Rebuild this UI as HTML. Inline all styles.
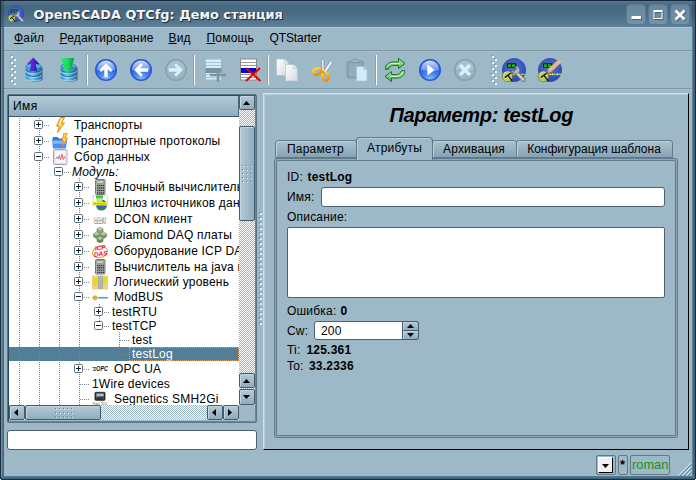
<!DOCTYPE html>
<html><head><meta charset="utf-8"><title>OpenSCADA QTCfg</title>
<style>
*{box-sizing:border-box;margin:0;padding:0}
html,body{width:696px;height:480px;overflow:hidden;background:#9db8c6}
body{position:relative;font-family:"Liberation Sans",sans-serif;font-size:12px;color:#000;line-height:14px}
.a{position:absolute}
.t{position:absolute;white-space:nowrap;line-height:14px;height:14px;letter-spacing:.2px}
b{font-weight:bold;letter-spacing:.2px}
#win{left:0;top:0;width:696px;height:480px;background:#9db8c6}
#title{left:0;top:0;width:696px;height:27px;z-index:2;border-left:1px solid #1c2c38;border-right:1px solid #1c2c38;box-shadow:inset 3px 0 0 rgba(28,44,56,.28),inset -3px 0 0 rgba(28,44,56,.28);background:linear-gradient(#16283a 0,#16283a 1px,#55778e 1px,#50728a 3px,#456780 6px,#486a83 13px,#5c7f97 26px,#5c7f97 27px)}
#title .tt{left:32.5px;top:7px;font:bold 12.9px "DejaVu Sans",sans-serif;color:#f4f4f4;text-shadow:1px 1px 1px #152838;line-height:16px;height:16px;white-space:nowrap}
#bl{left:0;top:0;width:4px;height:480px;background:linear-gradient(90deg,#1c2c38 0,#1c2c38 1px,#6a90aa 1px,#6a90aa 2px,#50748d 2px,#50748d 3px,#476982 3px)}
#br{left:692px;top:0;width:4px;height:480px;background:linear-gradient(90deg,#5a809a 0,#5a809a 1px,#44667f 1px,#44667f 2px,#3d5f78 2px,#3d5f78 3px,#1c2c38 3px)}
#bb{left:1px;top:476px;width:694px;height:4px;background:linear-gradient(#56788f 0,#56788f 1px,#4a6e88 1px,#4a6e88 2px,#3f627b 2px,#3f627b 3px,#1c2c38 3px)}
.wb{z-index:3;border:1px solid #587991;border-radius:4px;background:linear-gradient(#66879e,#7393a9)}
.menu{top:31px;letter-spacing:.2px}
u{text-decoration:underline;text-underline-offset:1px}
.hl{left:4px;width:688px;height:1px}
.ic{position:absolute;overflow:visible}
.sep{top:55px;width:2px;height:30px;background:linear-gradient(90deg,#87a1b0 0,#87a1b0 1px,#fff 1px)}
</style></head><body>
<div id="win" class="a">

<svg width="0" height="0" style="position:absolute"><defs>
<radialGradient id="gb" cx="50%" cy="100%" r="70%"><stop offset="0" stop-color="#8cc4ff"/><stop offset=".5" stop-color="#4a88f4"/><stop offset="1" stop-color="#2a5ce0"/></radialGradient>
<linearGradient id="gl" x1="0" y1="0" x2="0" y2="1"><stop offset="0" stop-color="#fff" stop-opacity=".8"/><stop offset="1" stop-color="#fff" stop-opacity=".25"/></linearGradient>
<linearGradient id="gdb" x1="0" y1="0" x2="1" y2="0"><stop offset="0" stop-color="#2a8ccc"/><stop offset=".4" stop-color="#7cccf0"/><stop offset="1" stop-color="#1c68a8"/></linearGradient>
<linearGradient id="gpu" x1="0" y1="0" x2="1" y2="0"><stop offset="0" stop-color="#6a32e8"/><stop offset=".45" stop-color="#5a24d8"/><stop offset="1" stop-color="#2c0c88"/></linearGradient>
<linearGradient id="ggr" x1="0" y1="0" x2="1" y2="0"><stop offset="0" stop-color="#28e878"/><stop offset=".5" stop-color="#20d868"/><stop offset="1" stop-color="#0c9040"/></linearGradient>
<linearGradient id="gpg" x1="0" y1="0" x2="1" y2="1"><stop offset="0" stop-color="#ffffff"/><stop offset="1" stop-color="#d4d8dc"/></linearGradient>
<linearGradient id="gor" x1="0" y1="0" x2="0" y2="1"><stop offset="0" stop-color="#ffd23a"/><stop offset="1" stop-color="#f08a00"/></linearGradient>
<linearGradient id="ggn" x1="0" y1="0" x2="0" y2="1"><stop offset="0" stop-color="#b8f0b0"/><stop offset="1" stop-color="#38b838"/></linearGradient>
<radialGradient id="gsc" cx="50%" cy="40%" r="60%"><stop offset="0" stop-color="#4a78e8"/><stop offset="1" stop-color="#2a48b8"/></radialGradient>
</defs></svg>

<div id="title" class="a"><div class="a tt">OpenSCADA QTCfg: Демо станция</div>
<svg class="ic" style="left:7px;top:6px" width="16" height="16" viewBox="0 0 24 24">
<circle cx="12" cy="12" r="11.600" fill="url(#gsc)" stroke="#2a48a8" stroke-width=".8"/>
<rect x="4.300" y="4.800" width="10.700" height="5.400" rx=".8" fill="#0c1a10" stroke="#7080a0" stroke-width=".7"/>
<path d="M6 6.200h2.800v2.800h-2.800zM10 6.200h3v2.800h-3z" fill="#18b030"/>
<circle cx="5.400" cy="18.500" r="5.200" fill="#c4cc68" stroke="#5a6428" stroke-width=".6"/>
<path d="M2.800 19.500l6-4.500M5.500 16.800l4.700 6" stroke="#101010" stroke-width="1.500"/>
<path d="M14.500 14.500l7 7.500" stroke="#707070" stroke-width="4.400" stroke-linecap="round"/><path d="M14.500 14.500l7 7.500" stroke="#c0c0c0" stroke-width="2.800" stroke-linecap="round"/>
<path d="M9.500 11.500c0 3 2.500 5 5.500 4.500l2.500-2.500c.5-3-1.500-5.500-4.500-5.500l1.500 3-2.500 2.500z" fill="#c0c0c0" stroke="#686868" stroke-width=".7"/></svg>
</div>
<div id="bl" class="a"></div><div id="br" class="a"></div><div id="bb" class="a"></div>
<div class="a" style="left:0;top:0;width:1px;height:1px;background:#fff"></div><div class="a" style="left:695px;top:0;width:1px;height:1px;background:#fff"></div><div class="a" style="left:0;top:479px;width:1px;height:1px;background:#fff"></div><div class="a" style="left:695px;top:479px;width:1px;height:1px;background:#fff"></div>


<div class="a" style="left:4px;top:27px;width:688px;height:1px;background:#b4c9d5"></div>
<div class="t menu" style="left:14px"><u>Ф</u>айл</div>
<div class="t menu" style="left:59.5px"><u>Р</u>едактирование</div>
<div class="t menu" style="left:168.5px"><u>В</u>ид</div>
<div class="t menu" style="left:206.5px"><u>П</u>омощь</div>
<div class="t menu" style="left:269.500px;letter-spacing:-.1px">QTStarter</div>
<div class="a hl" style="top:50px;background:#7d97a6"></div>
<div class="a hl" style="top:51px;background:#a6bfcd"></div>
<div class="a wb" style="left:626px;top:4px;width:20px;height:21px"><svg class="a" style="left:0;top:0" width="18" height="19"><rect x="5.5" y="12" width="9.5" height="3" fill="#2c475b" opacity=".6"/><rect x="4.5" y="11" width="9.5" height="3" fill="#fff"/></svg></div>
<div class="a wb" style="left:648px;top:4px;width:20px;height:21px"><svg class="a" style="left:0;top:0" width="18" height="19"><path d="M5.5 6h9v9h-9z M6.5 8v6h7v-6z" fill="#2c475b" opacity=".6" fill-rule="evenodd"/><path d="M4.5 5h9v9h-9z M5.500 7v6h7v-6z" fill="#fff" fill-rule="evenodd"/></svg></div>
<div class="a wb" style="left:670px;top:4px;width:20px;height:21px"><svg class="a" style="left:0;top:0" width="18" height="19"><path d="M5.5 6.500l9 9M14.500 6.500l-9 9" stroke="#2c475b" opacity=".6" stroke-width="2.600"/><path d="M4.500 5.500l9 9M13.500 5.500l-9 9" stroke="#fff" stroke-width="2.600"/></svg></div>

<div class="a hl" style="top:88px;background:#7d97a6"></div><div class="a hl" style="top:89px;background:#a6bfcd"></div>
<svg class="ic" style="left:10px;top:55px" width="7" height="32"><rect x="0" y="0" width="2" height="2" fill="#869fae"/><rect x="3" y="3" width="2" height="2" fill="#869fae"/><rect x="0" y="6" width="2" height="2" fill="#869fae"/><rect x="3" y="9" width="2" height="2" fill="#869fae"/><rect x="0" y="12" width="2" height="2" fill="#869fae"/><rect x="3" y="15" width="2" height="2" fill="#869fae"/><rect x="0" y="18" width="2" height="2" fill="#869fae"/><rect x="3" y="21" width="2" height="2" fill="#869fae"/><rect x="0" y="24" width="2" height="2" fill="#869fae"/><rect x="3" y="27" width="2" height="2" fill="#869fae"/><rect x="1" y="1" width="2" height="2" fill="#eef6fa"/><rect x="4" y="4" width="2" height="2" fill="#eef6fa"/><rect x="1" y="7" width="2" height="2" fill="#eef6fa"/><rect x="4" y="10" width="2" height="2" fill="#eef6fa"/><rect x="1" y="13" width="2" height="2" fill="#eef6fa"/><rect x="4" y="16" width="2" height="2" fill="#eef6fa"/><rect x="1" y="19" width="2" height="2" fill="#eef6fa"/><rect x="4" y="22" width="2" height="2" fill="#eef6fa"/><rect x="1" y="25" width="2" height="2" fill="#eef6fa"/><rect x="4" y="28" width="2" height="2" fill="#eef6fa"/></svg>
<svg class="ic" style="left:22px;top:56px" width="24" height="28" viewBox="0 0 24 28"><path d="M5.300 11v12c0 1.500 3.500 2.700 7.700 2.700s7.700-1.200 7.700-2.700V11z" fill="#12304a" opacity=".5"/>
<path d="M3.800 10.200v12.100c0 1.500 3.400 2.600 7.700 2.600s7.700-1.100 7.700-2.600V10.200z" fill="url(#gdb)"/>
<path d="M3.800 13.600c0 1.500 3.400 2.600 7.700 2.600s7.700-1.100 7.700-2.600M3.800 17.800c0 1.500 3.400 2.600 7.700 2.600s7.700-1.100 7.700-2.600" fill="none" stroke="#1a5a92" stroke-width="1" opacity=".85"/>
<path d="M4 14.900c0 1.500 3.400 2.600 7.500 2.600s7.500-1.100 7.500-2.600M4 19.100c0 1.500 3.400 2.600 7.500 2.600s7.500-1.100 7.500-2.600M4.300 22.800c0 1.100 3.200 2 7.200 2s7.200-.9 7.200-2" fill="none" stroke="#b4ecff" stroke-width="1.200" opacity=".55"/>
<ellipse cx="11.500" cy="10.300" rx="7.700" ry="2.500" fill="#58b4e4" stroke="#2478b4" stroke-width=".7"/><path d="M11.400 1.600L5 8c1.500 .4 3 .4 4.300 -.2L7.400 15.200h8l-1.900-7.400c1.500 .6 3 .6 4 .2z" fill="url(#gpu)"/></svg>
<svg class="ic" style="left:57px;top:56px" width="24" height="28" viewBox="0 0 24 28"><path d="M5.300 11v12c0 1.500 3.500 2.700 7.700 2.700s7.700-1.200 7.700-2.700V11z" fill="#12304a" opacity=".5"/>
<path d="M3.800 10.200v12.100c0 1.500 3.400 2.600 7.700 2.600s7.700-1.100 7.700-2.600V10.200z" fill="url(#gdb)"/>
<path d="M3.800 13.600c0 1.500 3.400 2.600 7.700 2.600s7.700-1.100 7.700-2.600M3.800 17.800c0 1.500 3.400 2.600 7.700 2.600s7.700-1.100 7.700-2.600" fill="none" stroke="#1a5a92" stroke-width="1" opacity=".85"/>
<path d="M4 14.900c0 1.500 3.400 2.600 7.500 2.600s7.500-1.100 7.500-2.600M4 19.100c0 1.500 3.400 2.600 7.500 2.600s7.500-1.100 7.500-2.600M4.300 22.800c0 1.100 3.200 2 7.200 2s7.200-.9 7.200-2" fill="none" stroke="#b4ecff" stroke-width="1.200" opacity=".55"/>
<ellipse cx="11.500" cy="10.300" rx="7.700" ry="2.500" fill="#58b4e4" stroke="#2478b4" stroke-width=".7"/><path d="M4 2h13.200l-2.400 8.500 2-.2L11.200 17.800 5 10.300l2 .2z" fill="url(#ggr)"/></svg>
<div class="a sep" style="left:86px"></div>
<svg class="ic" style="left:95px;top:58.5px" width="22" height="22" viewBox="0 0 22 22"><circle cx="11" cy="11" r="10.300" fill="url(#gb)" stroke="#2858d0" stroke-width="1.400"/><path d="M1.800 10.800a9.200 9.200 0 0 1 18.400 0q-9.200 2.500-18.400 0z" fill="url(#gl)"/><path d="M11 4.200L4.300 10.900l2 2 3-3v8.300h3.400v-8.300l3 3 2-2z" fill="#fff"/></svg>
<svg class="ic" style="left:130px;top:58.5px" width="22" height="22" viewBox="0 0 22 22"><circle cx="11" cy="11" r="10.300" fill="url(#gb)" stroke="#2858d0" stroke-width="1.400"/><path d="M1.800 10.800a9.200 9.200 0 0 1 18.400 0q-9.200 2.500-18.400 0z" fill="url(#gl)"/><path d="M4.200 11l6.700-6.700 2 2-3 3h8.300v3.400h-8.300l3 3-2 2z" fill="#fff"/></svg>
<svg class="ic" style="left:165px;top:58.5px" width="22" height="22" viewBox="0 0 22 22"><circle cx="11" cy="11" r="10.300" fill="#9db5c2" stroke="#879fae" stroke-width="1.400"/><path d="M2 10.500a9 9 0 0 1 18 0q-9 2.500-18 0z" fill="#fff" opacity=".16"/><path d="M17.800 11l-6.700-6.700-2 2 3 3h-8.300v3.400h8.300l-3 3 2 2z" fill="#d8f2fc"/></svg>
<div class="a sep" style="left:193px"></div>
<svg class="ic" style="left:205px;top:58px" width="22" height="24" viewBox="0 0 22 24">
<rect x=".5" y="1" width="16" height="21" fill="#d3edf9" stroke="#9fb8c6" stroke-width="1"/>
<path d="M1 4.500h15M1 7.500h15M1 16.500h15M1 19.500h15" stroke="#a9c4d2" stroke-width="1"/>
<rect x=".5" y="10" width="16" height="5" fill="#7b939f"/>
<path d="M5 17h16M13 10.500v13" stroke="#7b939f" stroke-width="2.600"/></svg>
<svg class="ic" style="left:240px;top:58px" width="22" height="24" viewBox="0 0 22 24">
<rect x=".5" y="1" width="16" height="21" fill="#fff" stroke="#8a8a8a" stroke-width="1"/>
<path d="M1 4.500h15M1 7.500h15M1 16.500h15M1 19.500h15" stroke="#9a9a9a" stroke-width="1"/>
<rect x="1" y="10" width="15" height="5" fill="#0000d8"/>
<path d="M6 10l14.500 13M20 10L6 23" stroke="#e80000" stroke-width="2"/></svg>
<div class="a sep" style="left:267px"></div>
<svg class="ic" style="left:275px;top:58px" width="24" height="24" viewBox="0 0 24 24">
<path d="M1.500 1h8l4 4v12.500h-12z" fill="url(#gpg)" stroke="#b8c4cc" stroke-width=".8"/><path d="M9.500 1v4h4" fill="#e8ecf0" stroke="#b8c4cc" stroke-width=".6"/>
<path d="M10.500 6.500h8l4 4V23h-12z" fill="url(#gpg)" stroke="#b8c4cc" stroke-width=".8"/><path d="M18.500 6.500v4h4" fill="#e8ecf0" stroke="#b8c4cc" stroke-width=".6"/></svg>
<svg class="ic" style="left:311px;top:58px" width="24" height="24" viewBox="0 0 24 24">
<path d="M10.200 1l2.600 0 .7 13.500-2.500 1z" fill="#e4e8ec" stroke="#8090a0" stroke-width=".7"/>
<path d="M19.800 2.500l1.700 2L13.800 16.500l-2.600-1.500z" fill="#f4f6f8" stroke="#8090a0" stroke-width=".7"/>
<ellipse cx="6" cy="13.500" rx="4" ry="3" transform="rotate(-25 6 13.500)" fill="none" stroke="url(#gor)" stroke-width="2.600"/>
<ellipse cx="14.500" cy="18.500" rx="3" ry="4" transform="rotate(-20 14.500 18.500)" fill="none" stroke="url(#gor)" stroke-width="2.600"/>
<path d="M9 12.500l3.500 2 1.500 1" stroke="#f0a000" stroke-width="2.400" fill="none"/></svg>
<svg class="ic" style="left:346px;top:58px" width="24" height="24" viewBox="0 0 24 24">
<rect x="1" y="3" width="16.500" height="17" rx="2" fill="#89a3b2" stroke="#7d97a6" stroke-width=".8"/>
<path d="M5 4.500c0-2 1.500-3.500 4.300-3.500s4.300 1.500 4.300 3.500z" fill="#9db6c4" stroke="#7d97a6" stroke-width=".8"/>
<rect x="3" y="5.500" width="12.500" height="12.500" fill="#93adbc"/>
<path d="M10.500 8.500h7l3.500 3.500V23h-10.500z" fill="#d3ebf7" stroke="#a8c2d0" stroke-width=".7"/><path d="M17.500 8.500V12H21" fill="#bcd6e4" stroke="#a8c2d0" stroke-width=".5"/></svg>
<div class="a sep" style="left:375px"></div>
<svg class="ic" style="left:383px;top:57px" width="24" height="26" viewBox="0 0 24 26">
<path d="M2.500 12.500c-.5-5 3.500-7.500 8-7.500h5V1.500l6.500 5-6.500 5V8.500h-5c-2.800 0-4.300 1.300-4.800 3.600z" fill="url(#ggn)" stroke="#1f6f24" stroke-width="1"/>
<path d="M21.500 13.500c.5 5-3.500 7.500-8 7.500h-5v3.500L2 19.500l6.500-5V17.500h5c2.800 0 4.300-1.300 4.800-3.600z" fill="url(#ggn)" stroke="#1f6f24" stroke-width="1"/>
<path d="M4 10.500c.8-3 3.300-4 6.500-4h6M20 15.500c-.8 3-3.300 4-6.500 4h-6" fill="none" stroke="#eaffea" stroke-width="1" opacity=".8"/></svg>
<svg class="ic" style="left:419px;top:58.5px" width="22" height="22" viewBox="0 0 22 22"><circle cx="11" cy="11" r="10.300" fill="url(#gb)" stroke="#2858d0" stroke-width="1.400"/><path d="M1.800 10.800a9.200 9.200 0 0 1 18.400 0q-9.200 2.500-18.400 0z" fill="url(#gl)"/><path d="M8.300 5.500v11l7.400-5.500z" fill="#fff"/></svg>
<svg class="ic" style="left:454px;top:58.5px" width="22" height="22" viewBox="0 0 22 22"><circle cx="11" cy="11" r="10.300" fill="#9db5c2" stroke="#879fae" stroke-width="1.400"/><path d="M2 10.500a9 9 0 0 1 18 0q-9 2.500-18 0z" fill="#fff" opacity=".16"/><path d="M6 6l10 10M16 6l-10 10" stroke="#d8f2fc" stroke-width="3.400" /></svg>
<svg class="ic" style="left:491px;top:55px" width="7" height="32"><rect x="0" y="0" width="2" height="2" fill="#869fae"/><rect x="3" y="3" width="2" height="2" fill="#869fae"/><rect x="0" y="6" width="2" height="2" fill="#869fae"/><rect x="3" y="9" width="2" height="2" fill="#869fae"/><rect x="0" y="12" width="2" height="2" fill="#869fae"/><rect x="3" y="15" width="2" height="2" fill="#869fae"/><rect x="0" y="18" width="2" height="2" fill="#869fae"/><rect x="3" y="21" width="2" height="2" fill="#869fae"/><rect x="0" y="24" width="2" height="2" fill="#869fae"/><rect x="3" y="27" width="2" height="2" fill="#869fae"/><rect x="1" y="1" width="2" height="2" fill="#eef6fa"/><rect x="4" y="4" width="2" height="2" fill="#eef6fa"/><rect x="1" y="7" width="2" height="2" fill="#eef6fa"/><rect x="4" y="10" width="2" height="2" fill="#eef6fa"/><rect x="1" y="13" width="2" height="2" fill="#eef6fa"/><rect x="4" y="16" width="2" height="2" fill="#eef6fa"/><rect x="1" y="19" width="2" height="2" fill="#eef6fa"/><rect x="4" y="22" width="2" height="2" fill="#eef6fa"/><rect x="1" y="25" width="2" height="2" fill="#eef6fa"/><rect x="4" y="28" width="2" height="2" fill="#eef6fa"/></svg>
<svg class="ic" style="left:502px;top:58px" width="24" height="24" viewBox="0 0 24 24">
<circle cx="12" cy="12" r="11.600" fill="url(#gsc)" stroke="#2a48a8" stroke-width=".8"/>
<rect x="4.300" y="4.800" width="10.700" height="5.400" rx=".8" fill="#0c1a10" stroke="#7080a0" stroke-width=".7"/>
<path d="M6 6.200h2.800v2.800h-2.800zM10 6.200h3v2.800h-3z" fill="#18b030"/>
<path d="M10 16.300h12.500" stroke="#e8e030" stroke-width="1.100"/>
<circle cx="5.400" cy="18.500" r="5.200" fill="#c4cc68" stroke="#5a6428" stroke-width=".6"/>
<path d="M1.500 17a4.200 4.200 0 0 1 7.500-1.500" fill="none" stroke="#e8eca0" stroke-width="1.200" opacity=".7"/>
<path d="M2.800 19.500l6-4.500M5.500 16.800l4.700 6" stroke="#101010" stroke-width="1.300"/>
<path d="M14.500 14.500l7 7.500" stroke="#707070" stroke-width="4.400" stroke-linecap="round"/><path d="M14.500 14.500l7 7.500" stroke="#b4b4b4" stroke-width="2.800" stroke-linecap="round"/><path d="M9.500 11.500c0 3 2.500 5 5.500 4.500l2.500-2.500c.5-3-1.500-5.500-4.500-5.500l1.500 3-2.500 2.500z" fill="#b8b8b8" stroke="#686868" stroke-width=".7"/><path d="M15.500 15.500l6 6.500" stroke="#e8e8e8" stroke-width="1"/></svg>
<svg class="ic" style="left:537.5px;top:58px" width="24" height="24" viewBox="0 0 24 24">
<circle cx="12" cy="12" r="11.600" fill="url(#gsc)" stroke="#2a48a8" stroke-width=".8"/>
<rect x="4.300" y="4.800" width="10.700" height="5.400" rx=".8" fill="#0c1a10" stroke="#7080a0" stroke-width=".7"/>
<path d="M6 6.200h2.800v2.800h-2.800zM10 6.200h3v2.800h-3z" fill="#18b030"/>
<path d="M10 16.300h13.500" stroke="#e8e030" stroke-width="1.200"/><path d="M14.500 14.500l1 1.800-1 1.800-1-1.800zM19.500 14.500l1 1.800-1 1.800-1-1.800z" fill="#e8e8a0" stroke="#4060b0" stroke-width=".4"/>
<circle cx="5.400" cy="18.500" r="5.200" fill="#c4cc68" stroke="#5a6428" stroke-width=".6"/>
<path d="M1.500 17a4.200 4.200 0 0 1 7.500-1.500" fill="none" stroke="#e8eca0" stroke-width="1.200" opacity=".7"/>
<path d="M2.800 19.500l6-4.500M5.500 16.800l4.700 6" stroke="#101010" stroke-width="1.300"/>
<path d="M10.500 13.500l11.500-10.500" stroke="#b08858" stroke-width="5"/><path d="M10.800 13.200l11.500-10.500" stroke="#e0bc90" stroke-width="3.600"/><path d="M8.500 15.500l1.200-3.500 2.800 2.600z" fill="#f0e0b0" stroke="#504030" stroke-width=".5"/><path d="M8.500 15.500l.6-1.500 1 1z" fill="#202020"/></svg>
<div class="a" style="left:7px;top:94px;width:250px;height:329px;border:1px solid #587689;border-radius:2px;background:#9db8c6"></div>
<div class="a" style="left:8px;top:95px;width:248px;height:327px;border:1px solid;border-color:#2c465a #6a8799 #6a8799 #2c465a"></div>
<div class="a" id="vp" style="left:9px;top:116px;width:230px;height:289px;background:#fff;overflow:hidden">
<div class="a" style="left:0;top:231px;width:230px;height:14px;background:#527e98"></div>
<svg class="a" style="left:0;top:0" width="230" height="289" fill="none" stroke="#75848e" stroke-width="1" stroke-dasharray="1 1"><path d="M10.5 0V289" /><path d="M30.5 0V289" /><path d="M50.5 60V289" /><path d="M70.5 62V289" /><path d="M90.5 188V209" /><path d="M110.5 216V238" /><path d="M35 9.5H40"/><path d="M35 25.5H40"/><path d="M35 41.5H40"/><path d="M55 56.5H60"/><path d="M75 71.5H80"/><path d="M75 87.5H80"/><path d="M75 103.5H80"/><path d="M75 119.5H80"/><path d="M75 135.5H80"/><path d="M75 151.5H80"/><path d="M75 166.5H80"/><path d="M75 181.5H80"/><path d="M95 196.5H100"/><path d="M95 210.5H100"/><path d="M111 224.5H120"/><path d="M111 238.5H120"/><path d="M75 253.5H80"/><path d="M71 268.5H80"/><path d="M71 283.5H80"/></svg>
<svg class="a" style="left:0;top:0" width="230" height="289" fill="none" stroke-width="1"><rect x="25.5" y="4.5" width="8" height="8" rx="1" fill="#fff" stroke="#5c6f7c"/><path d="M27 8.5h5" stroke="#15222c"/><path d="M29.5 6v5" stroke="#15222c"/><rect x="25.5" y="20.5" width="8" height="8" rx="1" fill="#fff" stroke="#5c6f7c"/><path d="M27 24.5h5" stroke="#15222c"/><path d="M29.5 22v5" stroke="#15222c"/><rect x="25.5" y="36.5" width="8" height="8" rx="1" fill="#fff" stroke="#5c6f7c"/><path d="M27 40.5h5" stroke="#15222c"/><rect x="45.5" y="51.5" width="8" height="8" rx="1" fill="#fff" stroke="#5c6f7c"/><path d="M47 55.5h5" stroke="#15222c"/><rect x="65.5" y="66.5" width="8" height="8" rx="1" fill="#fff" stroke="#5c6f7c"/><path d="M67 70.5h5" stroke="#15222c"/><path d="M69.5 68v5" stroke="#15222c"/><rect x="65.5" y="82.5" width="8" height="8" rx="1" fill="#fff" stroke="#5c6f7c"/><path d="M67 86.5h5" stroke="#15222c"/><path d="M69.5 84v5" stroke="#15222c"/><rect x="65.5" y="98.5" width="8" height="8" rx="1" fill="#fff" stroke="#5c6f7c"/><path d="M67 102.5h5" stroke="#15222c"/><path d="M69.5 100v5" stroke="#15222c"/><rect x="65.5" y="114.5" width="8" height="8" rx="1" fill="#fff" stroke="#5c6f7c"/><path d="M67 118.5h5" stroke="#15222c"/><path d="M69.5 116v5" stroke="#15222c"/><rect x="65.5" y="130.5" width="8" height="8" rx="1" fill="#fff" stroke="#5c6f7c"/><path d="M67 134.5h5" stroke="#15222c"/><path d="M69.5 132v5" stroke="#15222c"/><rect x="65.5" y="146.5" width="8" height="8" rx="1" fill="#fff" stroke="#5c6f7c"/><path d="M67 150.5h5" stroke="#15222c"/><path d="M69.5 148v5" stroke="#15222c"/><rect x="65.5" y="161.5" width="8" height="8" rx="1" fill="#fff" stroke="#5c6f7c"/><path d="M67 165.5h5" stroke="#15222c"/><path d="M69.5 163v5" stroke="#15222c"/><rect x="65.5" y="176.5" width="8" height="8" rx="1" fill="#fff" stroke="#5c6f7c"/><path d="M67 180.5h5" stroke="#15222c"/><rect x="85.5" y="191.5" width="8" height="8" rx="1" fill="#fff" stroke="#5c6f7c"/><path d="M87 195.5h5" stroke="#15222c"/><path d="M89.5 193v5" stroke="#15222c"/><rect x="85.5" y="205.5" width="8" height="8" rx="1" fill="#fff" stroke="#5c6f7c"/><path d="M87 209.5h5" stroke="#15222c"/><rect x="65.5" y="248.5" width="8" height="8" rx="1" fill="#fff" stroke="#5c6f7c"/><path d="M67 252.5h5" stroke="#15222c"/><path d="M69.5 250v5" stroke="#15222c"/></svg>
<svg class="a" style="left:43px;top:1px" width="16" height="16" viewBox="0 0 16 16"><path d="M8.500 0.500h4L9.500 6h3L5.500 15.500l1.800-6.500H4.500z" fill="#ffd83a" stroke="#f07818" stroke-width=".9"/><path d="M8.800 1.500h2L8 7l-1.500 4z" fill="#fff6b0"/></svg>
<div class="t" style="left:65px;top:2px;color:#000;letter-spacing:.2px;">Транспорты</div>
<svg class="a" style="left:43px;top:17px" width="16" height="16" viewBox="0 0 16 16"><path d="M.5 5.500c0-1 .5-1.500 1.500-1.500h3.500l1.500 1.500h6v3H.5z" fill="#3a74d4"/><path d="M.2 7h15l-1.200 7.500c0 .5-.5 1-1 1H1.800c-.5 0-1-.5-1-1z" fill="#4c8ef0"/><path d="M.8 7.800h13.500l-.4 3H1.200z" fill="#9cc8ff" opacity=".75"/><path d="M12 0h3.500l-2.300 5h2.300L10.500 13.500l1.200-5.500H9.800z" fill="#ffd83a" stroke="#f07818" stroke-width=".8"/></svg>
<div class="t" style="left:65px;top:18px;color:#000;letter-spacing:.2px;">Транспортные протоколы</div>
<svg class="a" style="left:43px;top:33px" width="16" height="16" viewBox="0 0 16 16"><rect x="1.500" y=".5" width="13.500" height="15" rx="1" fill="#f6f6f6" stroke="#a8a8a8" stroke-width="1"/><rect x="2.500" y="1.500" width="11.500" height="13" fill="none" stroke="#dcdcdc" stroke-width="1"/><path d="M3.500 9.500l1.500-1.500 1 2 1.500-3.500 1 4.500 1.500-6 1.200 5.500 1.200-3 .8 2" fill="none" stroke="#e06878" stroke-width="1"/></svg>
<div class="t" style="left:65px;top:34px;color:#000;letter-spacing:.2px;">Сбор данных</div>
<div class="t" style="left:63px;top:49px;color:#000;letter-spacing:.2px;font-style:italic">Модуль:</div>
<svg class="a" style="left:83px;top:63px" width="16" height="16" viewBox="0 0 16 16"><rect x="3.500" y=".5" width="9.500" height="15" rx="1" fill="#b4b4b4" stroke="#787878" stroke-width="1"/><rect x="4.800" y="1.800" width="7" height="2.600" fill="#c4d4bc" stroke="#6a6a6a" stroke-width=".4"/><path d="M5 6.500h7M5 9h7M5 11.500h7M5 14h7" stroke="#383838" stroke-width="1.500" stroke-dasharray="1.400 .5"/></svg>
<div class="t" style="left:105px;top:64px;color:#000;letter-spacing:.2px;">Блочный вычислитель</div>
<svg class="a" style="left:83px;top:79px" width="16" height="16" viewBox="0 0 16 16"><circle cx="9.500" cy="10" r="5.500" fill="#3a60c8"/><path d="M5 12.500q4.500 2.500 9 0" stroke="#2a8840" stroke-width="1.500" fill="none"/><rect x="1" y=".5" width="14.500" height="8" fill="none" stroke="#f0a0c0" stroke-width=".5"/><rect x="4" y=".5" width="7" height="3" fill="#30d040"/><rect x="4.500" y="3.500" width="6" height="4" fill="#c8e070"/><rect x=".5" y="7" width="15.500" height="3.500" fill="#e8e820"/><path d="M2 8.800h12" stroke="#90a020" stroke-width="1" stroke-dasharray="2 1"/></svg>
<div class="t" style="left:105px;top:80px;color:#000;letter-spacing:.2px;">Шлюз источников данных</div>
<svg class="a" style="left:83px;top:95px" width="16" height="16" viewBox="0 0 16 16"><text x="8" y="8.500" font-family="Liberation Sans,sans-serif" font-size="3.500" text-anchor="middle" fill="#909090">ICPDAS</text><text x="8" y="12.800" font-family="Liberation Sans,sans-serif" font-size="5.500" text-anchor="middle" fill="#808080" textLength="12">DCON</text></svg>
<div class="t" style="left:105px;top:96px;color:#000;letter-spacing:.2px;">DCON клиент</div>
<svg class="a" style="left:83px;top:111px" width="16" height="16" viewBox="0 0 16 16"><path d="M8 0l3 1.800v3L8 6.500 5 4.800v-3z" fill="#88a878" stroke="#4a6a40" stroke-width=".5"/><path d="M4.500 5l3 1.800v3l-3 1.700-3-1.700v-3z" fill="#7a9a6a" stroke="#4a6a40" stroke-width=".5"/><path d="M11.500 5l3 1.800v3l-3 1.700-3-1.700v-3z" fill="#7a9a6a" stroke="#4a6a40" stroke-width=".5"/><path d="M8 9.500l3 1.800v3L8 16l-3-1.700v-3z" fill="#6a8a5a" stroke="#4a6a40" stroke-width=".5"/><path d="M8 0l3 1.800L8 3.500 5 1.800zM4.500 5l3 1.800-3 1.700-3-1.700zM11.500 5l3 1.800-3 1.700-3-1.700zM8 9.500l3 1.800-3 1.700-3-1.700z" fill="#b8d0a8"/></svg>
<div class="t" style="left:105px;top:112px;color:#000;letter-spacing:.2px;">Diamond DAQ платы</div>
<svg class="a" style="left:83px;top:127px" width="16" height="16" viewBox="0 0 16 16"><ellipse cx="8" cy="9" rx="7.500" ry="5.500" fill="none" stroke="#f0a020" stroke-width="1" transform="rotate(-15 8 9)"/><text x="8.500" y="7" font-family="Liberation Sans,sans-serif" font-weight="bold" font-style="italic" font-size="6.500" text-anchor="middle" fill="#e02020" transform="rotate(-8 8 7)">ICP</text><text x="9" y="13" font-family="Liberation Sans,sans-serif" font-weight="bold" font-style="italic" font-size="6.500" text-anchor="middle" fill="#e02020" transform="rotate(-8 9 13)">DAS</text></svg>
<div class="t" style="left:105px;top:128px;color:#000;letter-spacing:.2px;">Оборудование ICP DAS</div>
<svg class="a" style="left:83px;top:143px" width="16" height="16" viewBox="0 0 16 16"><rect x="3.500" y=".5" width="9.500" height="14.500" rx="1" fill="#b4b4b4" stroke="#787878" stroke-width="1"/><rect x="4.800" y="1.800" width="7" height="2.600" fill="#c4d4bc" stroke="#6a6a6a" stroke-width=".4"/><path d="M5 6.500h7M5 8.800h7M5 11.100h7M5 13.400h7" stroke="#383838" stroke-width="1.400" stroke-dasharray="1.400 .5"/></svg>
<div class="t" style="left:105px;top:144px;color:#000;letter-spacing:.2px;">Вычислитель на java подобном языке</div>
<svg class="a" style="left:83px;top:158px" width="16" height="16" viewBox="0 0 16 16"><rect x="0" y="1.500" width="16" height="14" fill="#f4cc90"/><rect x="1" y="4" width="4.500" height="8" fill="#e0e010"/><rect x="11" y="3" width="4" height="6.500" fill="#e0e010"/><rect x="6.500" y="2.500" width="4" height="12" fill="#a8b8b8" stroke="#8a9a9a" stroke-width=".5"/></svg>
<div class="t" style="left:105px;top:159px;color:#000;letter-spacing:.2px;">Логический уровень</div>
<svg class="a" style="left:83px;top:173px" width="16" height="16" viewBox="0 0 16 16"><path d="M3 5.500l.7 1.500 1.600-.5-.5 1.500L6.300 8.700 4.800 9.400l.5 1.600-1.600-.5L3 12l-.7-1.500-1.600.5.500-1.600L-.3 8.700 1.200 8 .700 6.500l1.600.5z" fill="#f0a818"/><rect x="5.500" y="7.900" width="10.500" height="1.700" fill="#6cb4dc"/><path d="M6.500 8.700h9.500" stroke="#3a88b8" stroke-width=".8" stroke-dasharray="1.200 .8"/></svg>
<div class="t" style="left:105px;top:174px;color:#000;letter-spacing:.2px;">ModBUS</div>
<div class="t" style="left:103px;top:189px;color:#000;letter-spacing:.2px;">testRTU</div>
<div class="t" style="left:103px;top:203px;color:#000;letter-spacing:.2px;">testTCP</div>
<div class="t" style="left:123px;top:217px;color:#000;letter-spacing:.2px;">test</div>
<div class="t" style="left:123px;top:231px;color:#fff;letter-spacing:.2px;">testLog</div>
<div class="a" style="left:120px;top:231px;width:110px;height:14px;border:1px dotted #d8a070"></div>
<svg class="a" style="left:83px;top:245px" width="16" height="16" viewBox="0 0 16 16"><text x="10" y="10.400" font-family="Liberation Sans,sans-serif" font-weight="bold" font-style="italic" font-size="7" text-anchor="middle" fill="#101010" textLength="11.500" lengthAdjust="spacingAndGlyphs">OPC</text><path d="M.5 6.500h4M1.500 8h3M.8 9.500h3" stroke="#404040" stroke-width=".8"/></svg>
<div class="t" style="left:105px;top:246px;color:#000;letter-spacing:.2px;">OPC UA</div>
<div class="t" style="left:83px;top:261px;color:#000;letter-spacing:.2px;">1Wire devices</div>
<svg class="a" style="left:83px;top:275px" width="16" height="16" viewBox="0 0 16 16"><rect x="3" y="1.300" width="10" height="8" rx=".8" fill="#34343c" stroke="#1c1c24" stroke-width=".8"/><rect x="4.300" y="2.500" width="7.400" height="3" fill="#a4bcd4"/><path d="M3.800 6.500h1.400" stroke="#e03030" stroke-width="1.200"/><path d="M10 7.500h2" stroke="#806020" stroke-width=".8"/><text x="8" y="14.200" font-family="Liberation Sans,sans-serif" font-size="3.200" text-anchor="middle" fill="#606060">Pixel 2511</text></svg>
<div class="t" style="left:105px;top:276px;color:#000;letter-spacing:.2px;">Segnetics SMH2Gi</div>
</div>
<div class="a" style="left:9px;top:96px;width:230px;height:21px;background:linear-gradient(#b3c9d6,#8fadbf);border-bottom:1px solid #3b566a;border-right:1px solid #4d697c"></div>
<div class="t" style="left:13px;top:99px;letter-spacing:.4px">Имя</div>
<div class="a" style="left:239px;top:96px;width:16px;height:309px;background:conic-gradient(#fff 25%,#9db8c6 0 50%,#fff 0 75%,#9db8c6 0) 0 0/2px 2px"></div>
<div class="a" style="left:9px;top:405px;width:230px;height:15px;background:conic-gradient(#fff 25%,#9db8c6 0 50%,#fff 0 75%,#9db8c6 0) 0 0/2px 2px"></div>
<div class="a" style="left:239px;top:405px;width:16px;height:15px;background:#9db8c6"></div>
<div class="a sbb" style="left:239px;top:95px;width:16px;height:15px"><svg class="a" style="left:3px;top:5px" width="7" height="4"><path d="M0 4L3.5 0 7 4z" fill="#000"/></svg></div>
<div class="a sbb" style="left:239px;top:373px;width:16px;height:15px"><svg class="a" style="left:3px;top:5px" width="7" height="4"><path d="M0 4L3.5 0 7 4z" fill="#000"/></svg></div>
<div class="a sbb" style="left:239px;top:389px;width:16px;height:16px"><svg class="a" style="left:3px;top:5px" width="7" height="4"><path d="M0 0h7L3.5 4z" fill="#000"/></svg></div>
<div class="a sbb" style="left:9px;top:405px;width:16px;height:15px"><svg class="a" style="left:4px;top:3px" width="4" height="7"><path d="M4 0v7L0 3.5z" fill="#000"/></svg></div>
<div class="a sbb" style="left:207px;top:405px;width:16px;height:15px"><svg class="a" style="left:4px;top:3px" width="4" height="7"><path d="M4 0v7L0 3.5z" fill="#000"/></svg></div>
<div class="a sbb" style="left:223px;top:405px;width:16px;height:15px"><svg class="a" style="left:4px;top:3px" width="4" height="7"><path d="M0 0v7l4-3.5z" fill="#000"/></svg></div>
<div class="a sbb" style="left:239px;top:126px;width:16px;height:95px;background:linear-gradient(90deg,#b3c9d6,#8fadbf)"><svg class="a" style="left:2px;top:38px" width="10" height="18"><rect x="0" y="0" width="1" height="1" fill="#6a8596"/><rect x="1" y="1" width="1" height="1" fill="#dcebf2"/><rect x="0" y="4" width="1" height="1" fill="#6a8596"/><rect x="1" y="5" width="1" height="1" fill="#dcebf2"/><rect x="0" y="8" width="1" height="1" fill="#6a8596"/><rect x="1" y="9" width="1" height="1" fill="#dcebf2"/><rect x="0" y="12" width="1" height="1" fill="#6a8596"/><rect x="1" y="13" width="1" height="1" fill="#dcebf2"/><rect x="0" y="16" width="1" height="1" fill="#6a8596"/><rect x="1" y="17" width="1" height="1" fill="#dcebf2"/><rect x="4" y="0" width="1" height="1" fill="#6a8596"/><rect x="5" y="1" width="1" height="1" fill="#dcebf2"/><rect x="4" y="4" width="1" height="1" fill="#6a8596"/><rect x="5" y="5" width="1" height="1" fill="#dcebf2"/><rect x="4" y="8" width="1" height="1" fill="#6a8596"/><rect x="5" y="9" width="1" height="1" fill="#dcebf2"/><rect x="4" y="12" width="1" height="1" fill="#6a8596"/><rect x="5" y="13" width="1" height="1" fill="#dcebf2"/><rect x="4" y="16" width="1" height="1" fill="#6a8596"/><rect x="5" y="17" width="1" height="1" fill="#dcebf2"/><rect x="8" y="0" width="1" height="1" fill="#6a8596"/><rect x="9" y="1" width="1" height="1" fill="#dcebf2"/><rect x="8" y="4" width="1" height="1" fill="#6a8596"/><rect x="9" y="5" width="1" height="1" fill="#dcebf2"/><rect x="8" y="8" width="1" height="1" fill="#6a8596"/><rect x="9" y="9" width="1" height="1" fill="#dcebf2"/><rect x="8" y="12" width="1" height="1" fill="#6a8596"/><rect x="9" y="13" width="1" height="1" fill="#dcebf2"/><rect x="8" y="16" width="1" height="1" fill="#6a8596"/><rect x="9" y="17" width="1" height="1" fill="#dcebf2"/></svg></div>
<div class="a sbb" style="left:25px;top:405px;width:76px;height:15px;background:linear-gradient(#b3c9d6,#8fadbf)"><svg class="a" style="left:29px;top:2px" width="18" height="10"><rect x="0" y="0" width="1" height="1" fill="#6a8596"/><rect x="1" y="1" width="1" height="1" fill="#dcebf2"/><rect x="0" y="4" width="1" height="1" fill="#6a8596"/><rect x="1" y="5" width="1" height="1" fill="#dcebf2"/><rect x="0" y="8" width="1" height="1" fill="#6a8596"/><rect x="1" y="9" width="1" height="1" fill="#dcebf2"/><rect x="4" y="0" width="1" height="1" fill="#6a8596"/><rect x="5" y="1" width="1" height="1" fill="#dcebf2"/><rect x="4" y="4" width="1" height="1" fill="#6a8596"/><rect x="5" y="5" width="1" height="1" fill="#dcebf2"/><rect x="4" y="8" width="1" height="1" fill="#6a8596"/><rect x="5" y="9" width="1" height="1" fill="#dcebf2"/><rect x="8" y="0" width="1" height="1" fill="#6a8596"/><rect x="9" y="1" width="1" height="1" fill="#dcebf2"/><rect x="8" y="4" width="1" height="1" fill="#6a8596"/><rect x="9" y="5" width="1" height="1" fill="#dcebf2"/><rect x="8" y="8" width="1" height="1" fill="#6a8596"/><rect x="9" y="9" width="1" height="1" fill="#dcebf2"/><rect x="12" y="0" width="1" height="1" fill="#6a8596"/><rect x="13" y="1" width="1" height="1" fill="#dcebf2"/><rect x="12" y="4" width="1" height="1" fill="#6a8596"/><rect x="13" y="5" width="1" height="1" fill="#dcebf2"/><rect x="12" y="8" width="1" height="1" fill="#6a8596"/><rect x="13" y="9" width="1" height="1" fill="#dcebf2"/><rect x="16" y="0" width="1" height="1" fill="#6a8596"/><rect x="17" y="1" width="1" height="1" fill="#dcebf2"/><rect x="16" y="4" width="1" height="1" fill="#6a8596"/><rect x="17" y="5" width="1" height="1" fill="#dcebf2"/><rect x="16" y="8" width="1" height="1" fill="#6a8596"/><rect x="17" y="9" width="1" height="1" fill="#dcebf2"/></svg></div>
<div class="a" style="left:7px;top:430px;width:250px;height:20px;background:#fff;border:1px solid #4f616e;border-radius:3px"></div>
<svg class="a" style="left:259px;top:212px" width="3" height="115"><rect x="0" y="0" width="2" height="2" fill="#7d97a6"/><rect x="1" y="1" width="2" height="2" fill="#e4f0f6"/><rect x="0" y="5" width="2" height="2" fill="#7d97a6"/><rect x="1" y="6" width="2" height="2" fill="#e4f0f6"/><rect x="0" y="10" width="2" height="2" fill="#7d97a6"/><rect x="1" y="11" width="2" height="2" fill="#e4f0f6"/><rect x="0" y="15" width="2" height="2" fill="#7d97a6"/><rect x="1" y="16" width="2" height="2" fill="#e4f0f6"/><rect x="0" y="20" width="2" height="2" fill="#7d97a6"/><rect x="1" y="21" width="2" height="2" fill="#e4f0f6"/><rect x="0" y="25" width="2" height="2" fill="#7d97a6"/><rect x="1" y="26" width="2" height="2" fill="#e4f0f6"/><rect x="0" y="30" width="2" height="2" fill="#7d97a6"/><rect x="1" y="31" width="2" height="2" fill="#e4f0f6"/><rect x="0" y="35" width="2" height="2" fill="#7d97a6"/><rect x="1" y="36" width="2" height="2" fill="#e4f0f6"/><rect x="0" y="40" width="2" height="2" fill="#7d97a6"/><rect x="1" y="41" width="2" height="2" fill="#e4f0f6"/><rect x="0" y="45" width="2" height="2" fill="#7d97a6"/><rect x="1" y="46" width="2" height="2" fill="#e4f0f6"/><rect x="0" y="50" width="2" height="2" fill="#7d97a6"/><rect x="1" y="51" width="2" height="2" fill="#e4f0f6"/><rect x="0" y="55" width="2" height="2" fill="#7d97a6"/><rect x="1" y="56" width="2" height="2" fill="#e4f0f6"/><rect x="0" y="60" width="2" height="2" fill="#7d97a6"/><rect x="1" y="61" width="2" height="2" fill="#e4f0f6"/><rect x="0" y="65" width="2" height="2" fill="#7d97a6"/><rect x="1" y="66" width="2" height="2" fill="#e4f0f6"/><rect x="0" y="70" width="2" height="2" fill="#7d97a6"/><rect x="1" y="71" width="2" height="2" fill="#e4f0f6"/><rect x="0" y="75" width="2" height="2" fill="#7d97a6"/><rect x="1" y="76" width="2" height="2" fill="#e4f0f6"/><rect x="0" y="80" width="2" height="2" fill="#7d97a6"/><rect x="1" y="81" width="2" height="2" fill="#e4f0f6"/><rect x="0" y="85" width="2" height="2" fill="#7d97a6"/><rect x="1" y="86" width="2" height="2" fill="#e4f0f6"/><rect x="0" y="90" width="2" height="2" fill="#7d97a6"/><rect x="1" y="91" width="2" height="2" fill="#e4f0f6"/><rect x="0" y="95" width="2" height="2" fill="#7d97a6"/><rect x="1" y="96" width="2" height="2" fill="#e4f0f6"/><rect x="0" y="100" width="2" height="2" fill="#7d97a6"/><rect x="1" y="101" width="2" height="2" fill="#e4f0f6"/><rect x="0" y="105" width="2" height="2" fill="#7d97a6"/><rect x="1" y="106" width="2" height="2" fill="#e4f0f6"/><rect x="0" y="110" width="2" height="2" fill="#7d97a6"/><rect x="1" y="111" width="2" height="2" fill="#e4f0f6"/></svg>
<style>.sbb{border:1px solid #445c6e;border-radius:2px;background:linear-gradient(#b3c9d6,#8fadbf);box-shadow:inset 1px 1px 0 #c3d6e0}</style>
<div class="a" style="left:263px;top:93px;width:426px;height:357px;border:1px solid;border-color:#cfe0e9 #000 #000 #cfe0e9"></div>
<div class="a" style="left:264px;top:94px;width:424px;height:355px;border:1px solid;border-color:#b9cfdb transparent transparent #b9cfdb"></div>
<div class="t" style="left:389.500px;top:103px;font:italic bold 20px 'Liberation Sans',sans-serif;letter-spacing:-.33px;line-height:24px;height:24px">Параметр: testLog</div>
<div class="a" style="left:274px;top:158px;width:404px;height:280px;border:1px solid #62798a;border-radius:3px;background:#8ea8b8"></div>
<div class="a" style="left:276px;top:160px;width:400px;height:276px;border:1px solid #62798a;border-radius:2px;background:#9db8c6"></div>
<div class="a" style="left:275px;top:140px;width:82px;height:18px;background:linear-gradient(#aac2cf,#86a4b6);border:1px solid #62798a;border-radius:3px 3px 0 0;box-shadow:inset 1px 1px 0 #bdd1dc"></div><div class="t" style="left:274.5px;top:142px;width:82px;text-align:center;letter-spacing:.2px">Параметр</div>
<div class="a" style="left:432px;top:140px;width:85px;height:18px;background:linear-gradient(#aac2cf,#86a4b6);border:1px solid #62798a;border-radius:3px 3px 0 0;box-shadow:inset 1px 1px 0 #bdd1dc"></div><div class="t" style="left:431.5px;top:142px;width:85px;text-align:center;letter-spacing:.2px">Архивация</div>
<div class="a" style="left:516px;top:140px;width:157px;height:18px;background:linear-gradient(#aac2cf,#86a4b6);border:1px solid #62798a;border-radius:3px 3px 0 0;box-shadow:inset 1px 1px 0 #bdd1dc"></div><div class="t" style="left:515.5px;top:142px;width:157px;text-align:center;letter-spacing:0">Конфигурация шаблона</div>
<div class="a" style="left:356px;top:137px;width:77px;height:23px;background:#9db8c6;border:1px solid #62798a;border-bottom:none;border-radius:4px 4px 0 0;box-shadow:inset 1px 1px 0 #b9cfdb"></div><div class="t" style="left:356px;top:141px;width:77px;text-align:center;letter-spacing:.2px">Атрибуты</div>
<div class="t" style="left:287px;top:170px">ID:</div>
<div class="t" style="left:307.5px;top:170px"><b>testLog</b></div>
<div class="t" style="left:287px;top:190px">Имя:</div>
<div class="a" style="left:321px;top:187px;width:344px;height:20px;background:#fff;border:1px solid #4f616e;border-radius:3px"></div>
<div class="t" style="left:287px;top:210px">Описание:</div>
<div class="a" style="left:287px;top:227px;width:378px;height:71px;background:#fff;border:1px solid #4f616e;border-radius:2px"></div>
<div class="t" style="left:287px;top:304px">Ошибка:</div>
<div class="t" style="left:340.5px;top:304px"><b>0</b></div>
<div class="t" style="left:287px;top:324px">Cw:</div>
<div class="a" style="left:314px;top:321px;width:105px;height:19px;background:#fff;border:1px solid #4f616e;border-radius:3px"></div>
<div class="t" style="left:321px;top:324px">200</div>
<div class="a sbb" style="left:402px;top:321px;width:17px;height:10px;border-radius:0 3px 0 0"><svg class="a" style="left:4px;top:2px" width="7" height="4"><path d="M0 4L3.500 0 7 4z" fill="#000"/></svg></div>
<div class="a sbb" style="left:402px;top:330px;width:17px;height:10px;border-radius:0 0 3px 0"><svg class="a" style="left:4px;top:2px" width="7" height="4"><path d="M0 0h7L3.500 4z" fill="#000"/></svg></div>
<div class="t" style="left:287px;top:343px">Ti:</div>
<div class="t" style="left:306.5px;top:343px"><b>125.361</b></div>
<div class="t" style="left:287px;top:359px">To:</div>
<div class="t" style="left:309px;top:359px"><b>33.2336</b></div>
<div class="a" style="left:596px;top:455px;width:20px;height:20px;border:1px solid #62798a;border-radius:2px"></div>
<div class="a" style="left:598px;top:457px;width:15px;height:16px;background:#f0f0f0;border:1px solid;border-color:#fff #000 #000 #fff"><svg class="a" style="left:3px;top:6px" width="7" height="4"><path d="M0 0h7L3.500 4z" fill="#000"/></svg></div>
<div class="a" style="left:618px;top:455px;width:10px;height:20px;border:1px solid #62798a;border-radius:2px"></div>
<div class="t" style="left:620px;top:458px;font-weight:bold;font-size:13px">*</div>
<div class="a" style="left:630px;top:455px;width:40px;height:20px;border:1px solid #62798a;border-radius:2px"></div>
<div class="t" style="left:632px;top:457px;color:#1a931a;font-size:12.800px;letter-spacing:0;line-height:16px;height:16px">roman</div>
<svg class="a" style="left:678px;top:462px" width="14" height="14"><path d="M13 1L1 13M13 5L5 13M13 9L9 13" stroke="#d8e6ee" stroke-width="1"/><path d="M14 2L2 14M14 6L6 14M14 10L10 14" stroke="#6d8798" stroke-width="1"/></svg>
</div></body></html>
